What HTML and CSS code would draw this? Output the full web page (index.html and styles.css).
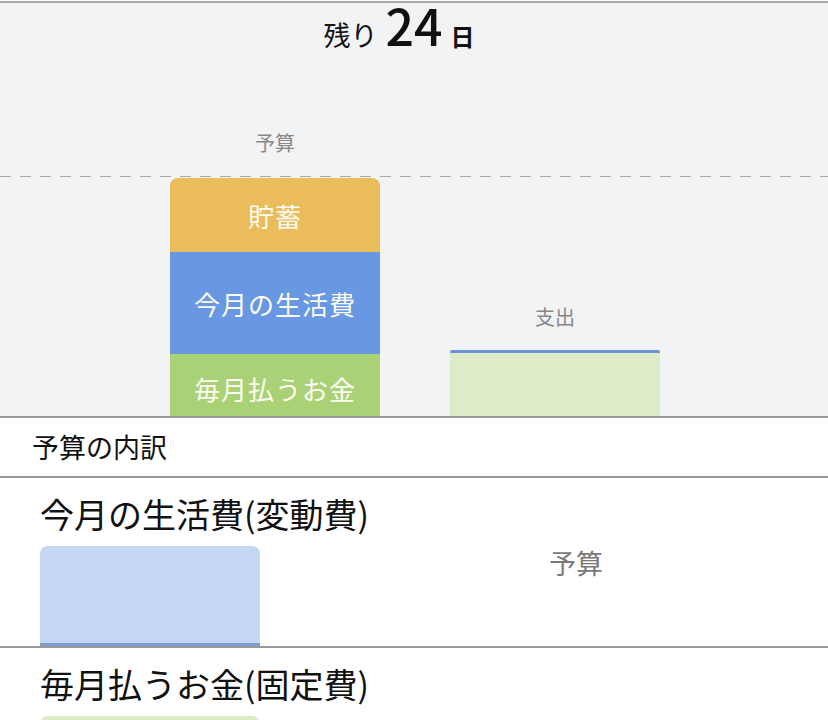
FILE: index.html
```html
<!DOCTYPE html>
<html lang="ja">

<head>
    <meta charset="UTF-8">
    <meta name="viewport" content="width=device-width, initial-scale=1.0">
    <title>予算</title>
    <link rel="stylesheet" href="styles.css">
</head>

<body>
    <div class="chart">
        <div class="remain">
            <span class="remain-label">残り</span>
            <span class="remain-days">24</span>
            <span class="remain-unit">日</span>
        </div>

        <div class="plot">
            <div class="col">
                <div class="col-label budget-label">予算</div>
                <div class="bar budget-bar">
                    <div class="seg seg-saving">貯蓄</div>
                    <div class="seg seg-living">今月の生活費</div>
                    <div class="seg seg-fixed">毎月払うお金</div>
                </div>
            </div>
            <div class="col">
                <div class="col-label spend-label">支出</div>
                <div class="bar spend-bar"></div>
            </div>
        </div>
    </div>

    <div class="breakdown">
        <div class="breakdown-head">予算の内訳</div>

        <div class="category">
            <div class="category-title">今月の生活費(変動費)</div>
            <div class="category-row">
                <div class="mini-bar mini-living"></div>
                <div class="mini-label">予算</div>
            </div>
        </div>

        <div class="category">
            <div class="category-title">毎月払うお金(固定費)</div>
            <div class="category-row">
                <div class="mini-bar mini-fixed"></div>
            </div>
        </div>
    </div>
</body>

</html>
```

FILE: styles.css
```css
body {
    font-family: "Noto Sans CJK JP", "Noto Sans", sans-serif;
    margin: 0;
    padding-top: 1px;
    background-color: white;
    overflow: hidden;
    height: 720px;
}

.chart {
    background-color: #f2f3f5;
    border-top: 2px solid #aaa;
    height: 413px;
    display: flex;
    flex-direction: column;
}

.remain {
    display: flex;
    justify-content: center;
    align-items: baseline;
    gap: 8px;
    height: 55px;
    padding: 1px 30px 0 0;
    color: #111;
}

.remain-label {
    font-size: 27px;
    line-height: 40px;
}

.remain-days {
    font-size: 50px;
    font-weight: 500;
    line-height: 40px;
}

.remain-unit {
    font-size: 24px;
    font-weight: 700;
    line-height: 40px;
}

.plot {
    flex: 1;
    display: flex;
    align-items: flex-end;
    gap: 70px;
    padding-left: 170px;
    position: relative;
}

.plot::before {
    content: "";
    position: absolute;
    left: 0;
    right: 0;
    bottom: 239px;
    height: 1px;
    background: repeating-linear-gradient(to right, #a8a8a8 0 11px, transparent 11px 20px);
}

.col {
    display: flex;
    flex-direction: column;
    align-items: center;
}

.col-label {
    font-size: 20px;
    line-height: 26px;
    color: #888;
}

.budget-label {
    margin-bottom: 22px;
}

.spend-label {
    margin-bottom: 20px;
}

.bar {
    width: 210px;
}

.budget-bar {
    height: 238px;
    border-radius: 8px 8px 0 0;
    overflow: hidden;
}

.seg {
    display: flex;
    align-items: center;
    justify-content: center;
    color: #fdfcf2;
    font-size: 26px;
    letter-spacing: 1px;
}

.seg-saving {
    height: 74px;
    background-color: #eabc5b;
}

.seg-living {
    height: 102px;
    background-color: #6898e3;
}

.seg-fixed {
    height: 62px;
    background-color: #a9d276;
    align-items: flex-start;
    padding-top: 16px;
    box-sizing: border-box;
}

.spend-bar {
    height: 63px;
    background-color: #dcecc6;
    border-top: 3px solid #6a93d8;
    border-radius: 2px 2px 0 0;
}

.breakdown {
    border-top: 2px solid #999;
}

.breakdown-head {
    height: 58px;
    line-height: 58px;
    padding-left: 32px;
    font-size: 27px;
    color: #111;
    border-bottom: 2px solid #999;
}

.category {
    border-bottom: 2px solid #999;
    padding: 14px 0 0 40px;
}

.category-title {
    font-size: 34px;
    line-height: 44px;
    color: #111;
    margin-bottom: 10px;
}

.category-row {
    display: flex;
    align-items: flex-start;
}

.mini-bar {
    width: 220px;
    height: 100px;
    border-radius: 8px 8px 0 0;
    box-sizing: border-box;
}

.mini-living {
    background-color: #c3d6f3;
    border-bottom: 3px solid #7f9ccf;
}

.mini-fixed {
    background-color: #dcecc6;
}

.mini-label {
    margin: 2px 0 0 289px;
    font-size: 27px;
    line-height: 30px;
    color: #7a7a7a;
}
```
